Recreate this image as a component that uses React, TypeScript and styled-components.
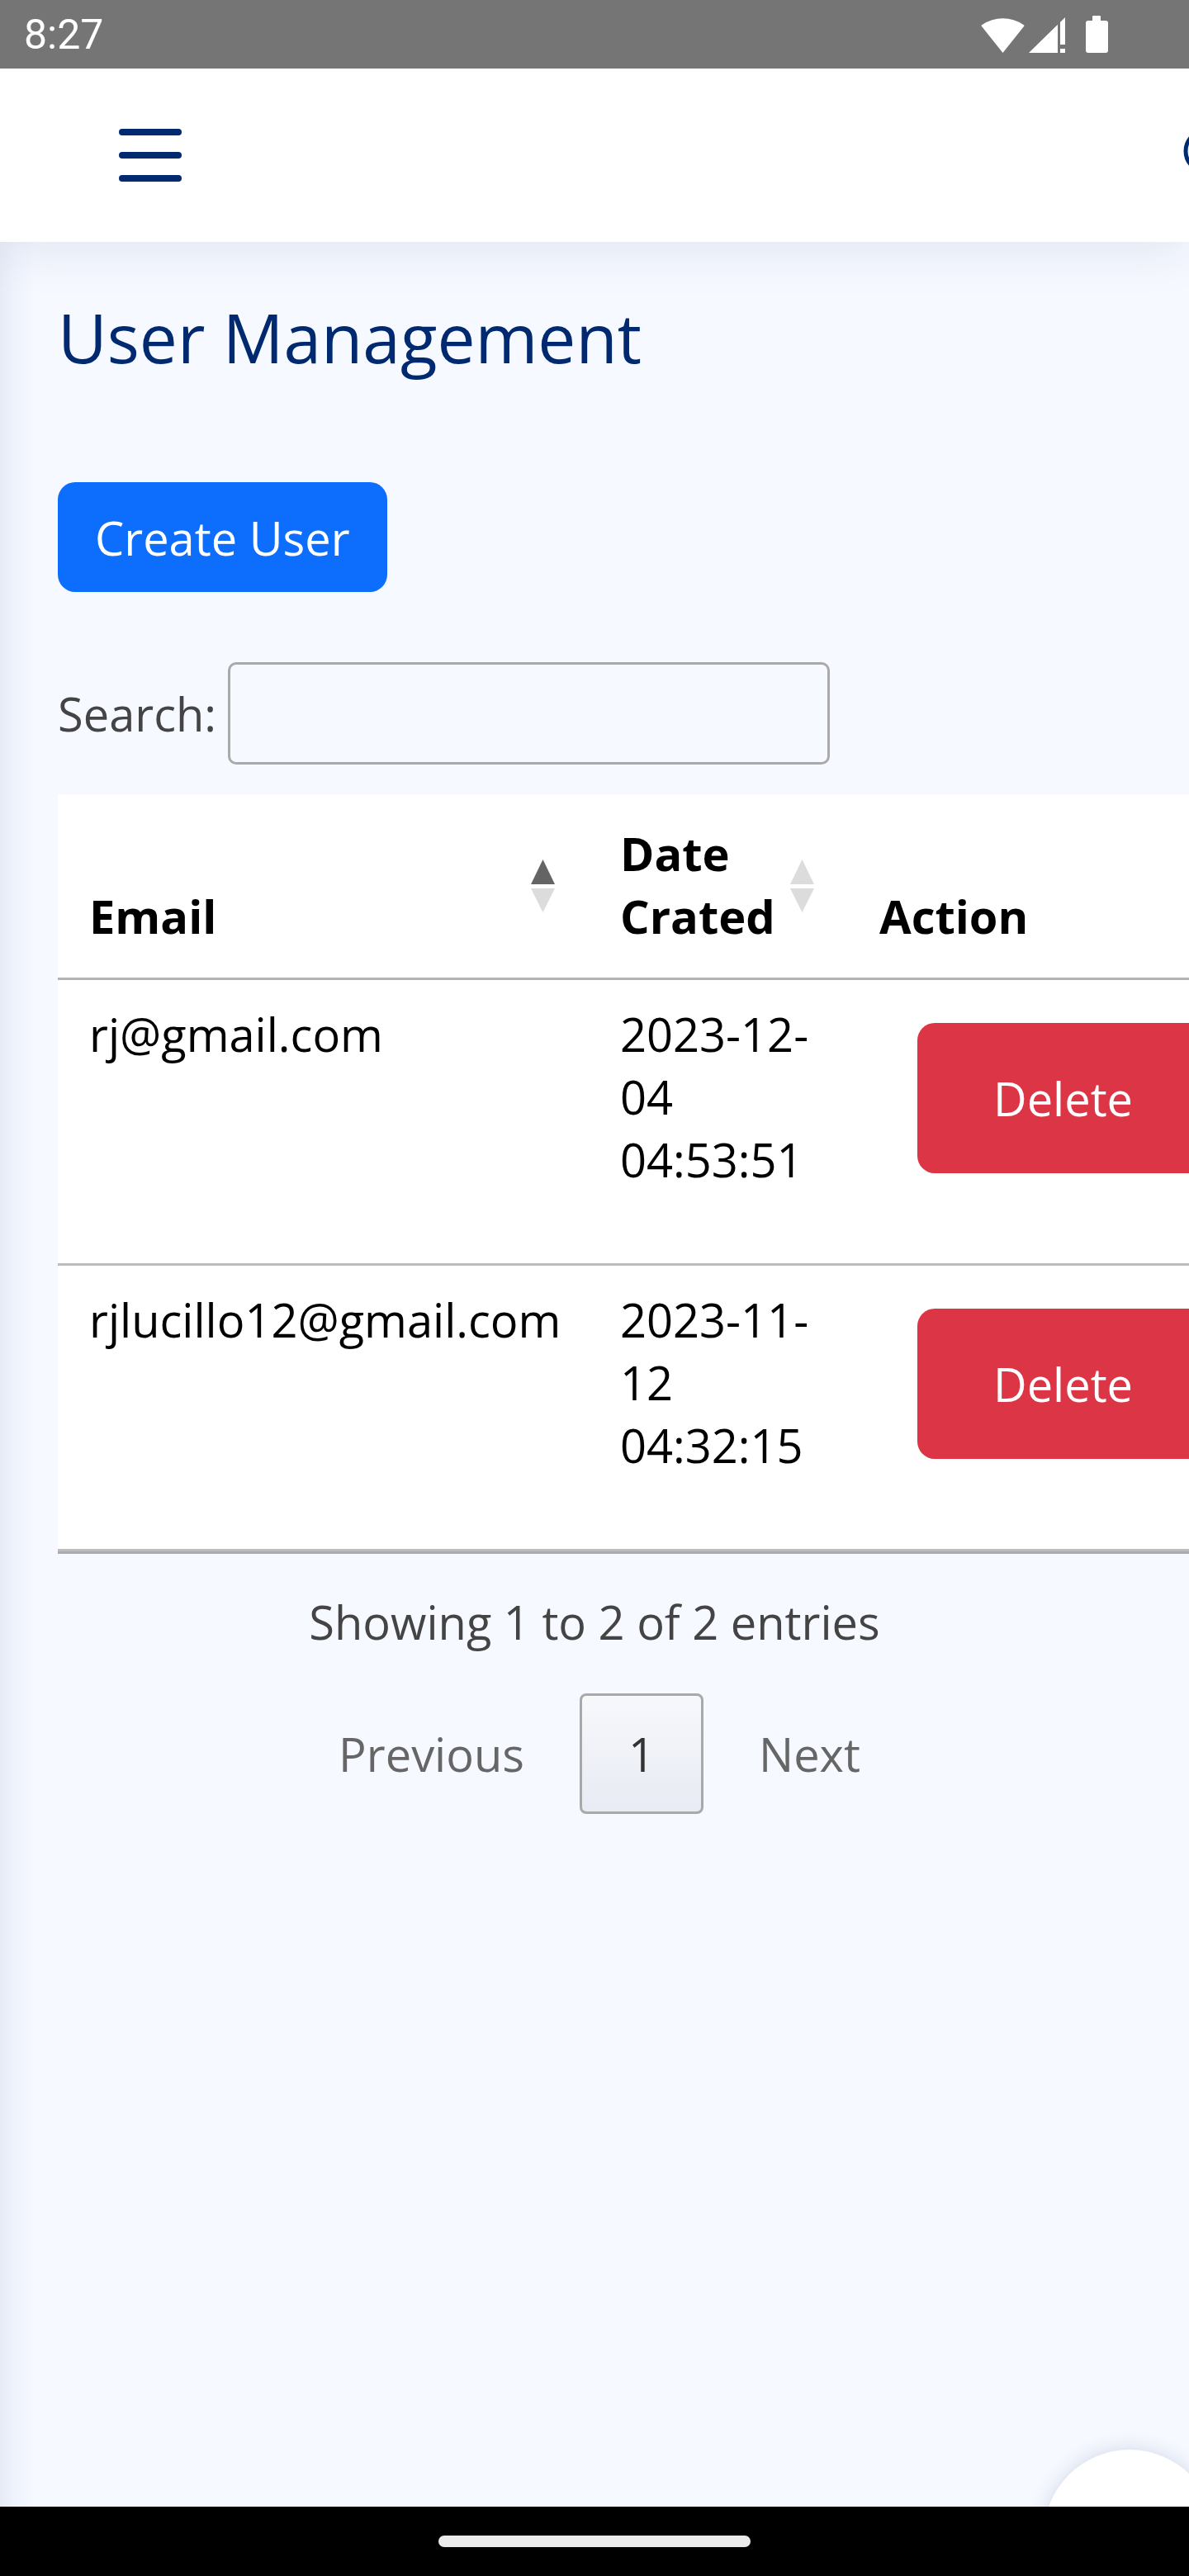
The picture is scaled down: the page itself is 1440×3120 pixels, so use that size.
import React from "react";
import styled, { createGlobalStyle } from "styled-components";

const GlobalStyle = createGlobalStyle`
  html, body { margin: 0; padding: 0; }
  body {
    font-family: "Open Sans", "Noto Sans", sans-serif;
    background: #f6f9ff;
    overflow: hidden;
  }
  * { box-sizing: border-box; }
`;

const Screen = styled.div`
  position: relative;
  width: 1440px;
  height: 3120px;
  display: flex;
  flex-direction: column;
  overflow: hidden;
  background: #f6f9ff;
`;

const StatusBar = styled.div`
  height: 83px;
  flex: none;
  background: #757575;
  display: flex;
  align-items: center;
  justify-content: space-between;
  padding: 0 98px 0 29px;
  color: #fff;
  font-family: Roboto, "Liberation Sans", sans-serif;
  font-size: 50px;
  position: relative;
  z-index: 3;
`;

const StatusIcons = styled.div`
  display: flex;
  align-items: flex-end;
  gap: 5px;
  height: 44px;
`;

const Header = styled.header`
  height: 210px;
  flex: none;
  background: #fff;
  display: flex;
  align-items: center;
  padding-left: 144px;
  position: relative;
  z-index: 2;
  overflow: hidden;
  box-shadow: 0 7px 60px rgba(1, 41, 112, 0.1);
`;

const Spacer = styled.div`
  flex: 1;
`;

const SearchToggle = styled.svg`
  flex: none;
  margin-right: -61px;
`;

const Main = styled.main`
  flex: 1;
  position: relative;
  padding: 65px 70px 0 70px;
  background: linear-gradient(to right, #e6ebf6 0px, #eff3fc 18px, #f6f9ff 44px);
  overflow: hidden;
`;

const Title = styled.h1`
  margin: 0;
  font-size: 82px;
  line-height: 101px;
  font-weight: 500;
  color: #012970;
`;

const CreateButton = styled.button`
  display: block;
  margin-top: 125px;
  height: 133px;
  padding: 0 45px;
  border: none;
  border-radius: 21px;
  background: #0d6efd;
  color: #fff;
  font-family: inherit;
  font-size: 56px;
  line-height: 84px;
`;

const SearchRow = styled.div`
  display: flex;
  align-items: center;
  margin-top: 85px;
  height: 124px;
`;

const SearchLabel = styled.label`
  font-size: 56px;
  line-height: 84px;
  color: #444;
`;

const SearchInput = styled.input`
  margin-left: 14px;
  width: 729px;
  height: 124px;
  border: 3.5px solid #aaa;
  border-radius: 10px;
  background: transparent;
  padding: 17px;
  font-size: 56px;
  font-family: inherit;
`;

const Table = styled.table`
  margin-top: 36px;
  width: 1480px;
  table-layout: fixed;
  border-collapse: separate;
  border-spacing: 0;
  background: #fff;
  border-bottom: 3.5px solid #a9abb0;
  font-size: 56px;
  line-height: 76px;
  color: #000;
`;

const Th = styled.th<{ $pl: number; $pr: number }>`
  position: relative;
  text-align: left;
  vertical-align: bottom;
  font-weight: 700;
  padding: 33px ${(p) => p.$pr}px 37px ${(p) => p.$pl}px;
  border-bottom: 3.5px solid #b3b3b3;
  height: 222px;
`;

const SortIcon = styled.svg`
  position: absolute;
  right: 44px;
  top: 50%;
  transform: translateY(-50%);
`;

const Td = styled.td<{ $pl: number; $pt: number; $pb: number }>`
  vertical-align: top;
  padding: ${(p) => p.$pt}px 20px ${(p) => p.$pb}px ${(p) => p.$pl}px;
  border-bottom: 3.5px solid #bcbcbc;
  word-break: normal;
`;

const DeleteButton = styled.button`
  display: block;
  height: 182px;
  padding: 0 92px;
  border: none;
  border-radius: 21px;
  background: #dc3545;
  color: #fff;
  font-family: inherit;
  font-size: 56px;
  line-height: 84px;
`;

const Info = styled.div`
  margin-top: 40px;
  text-align: center;
  font-size: 56px;
  line-height: 84px;
  color: #444;
`;

const Pagination = styled.div`
  margin-top: 45px;
  padding-left: 12px;
  display: flex;
  justify-content: center;
  align-items: center;
`;

const PageButton = styled.span<{ $current?: boolean }>`
  display: inline-block;
  margin: 0 4px;
  padding: 28px 56px;
  font-size: 56px;
  line-height: 84px;
  border: 3.5px solid ${(p) => (p.$current ? "#a9a9a9" : "transparent")};
  border-radius: 8px;
  color: ${(p) => (p.$current ? "#333" : "#666")};
  background: ${(p) =>
    p.$current ? "linear-gradient(to bottom, #f7f8fc 0%, #e8ebf3 100%)" : "transparent"};
`;

const FloatingCircle = styled.div`
  position: absolute;
  left: 1264px;
  top: 2967px;
  width: 208px;
  height: 208px;
  border-radius: 50%;
  background: #fff;
  box-shadow: 0 0 24px rgba(1, 41, 112, 0.16);
  z-index: 1;
`;

const NavBar = styled.div`
  height: 84px;
  flex: none;
  background: #000;
  display: flex;
  justify-content: center;
  padding-top: 35px;
  position: relative;
  z-index: 3;
`;

const HomePill = styled.div`
  width: 378px;
  height: 14px;
  border-radius: 7px;
  background: #ebebeb;
`;

const rows = [
  { email: "rj@gmail.com", date: "2023-12-04 04:53:51" },
  { email: "rjlucillo12@gmail.com", date: "2023-11-12 04:32:15" },
];

const Sort = ({ active }: { active?: boolean }) => (
  <SortIcon width="29" height="64" viewBox="0 0 29 64">
    <polygon points="14.5,0 29,30 0,30" fill={active ? "#646464" : "#dcdcdc"} />
    <polygon points="0,35 29,35 14.5,64" fill="#dcdcdc" />
  </SortIcon>
);

export default function App() {
  return (
    <>
      <GlobalStyle />
      <Screen>
        <StatusBar>
          <span>8:27</span>
          <StatusIcons>
            <svg width="53" height="43" viewBox="0 0 53 43">
              <path d="M26.5 43 L1 11 Q0 10 1.5 9 A44 44 0 0 1 51.5 9 Q53 10 52 11 Z" fill="#fff" />
            </svg>
            <svg width="44" height="43" viewBox="0 0 44 43">
              <polygon points="0,43 35,43 35,8.8" fill="#fff" />
              <polygon points="38,5.9 44,0 44,33 38,33" fill="#fff" />
              <rect x="38" y="38" width="6" height="5" fill="#fff" />
            </svg>
            <svg width="27" height="45" viewBox="0 0 27 45" style={{ marginLeft: 20 }}>
              <rect x="8" y="0" width="10" height="8" rx="1" fill="#fff" />
              <rect x="0" y="6" width="27" height="39" rx="3" fill="#fff" />
            </svg>
          </StatusIcons>
        </StatusBar>

        <Header>
          <svg width="76" height="64" viewBox="0 0 76 64">
            <g stroke="#012970" strokeWidth="8" strokeLinecap="round">
              <line x1="4" y1="4" x2="72" y2="4" />
              <line x1="4" y1="32" x2="72" y2="32" />
              <line x1="4" y1="60" x2="72" y2="60" />
            </g>
          </svg>
          <Spacer />
          <SearchToggle width="69" height="69" viewBox="0 0 69 69">
            <circle cx="29" cy="29" r="25" fill="none" stroke="#012970" strokeWidth="5" />
            <line x1="47" y1="47" x2="65" y2="65" stroke="#012970" strokeWidth="5" strokeLinecap="round" />
          </SearchToggle>
        </Header>

        <Main>
          <Title>User Management</Title>
          <CreateButton>Create User</CreateButton>
          <SearchRow>
            <SearchLabel htmlFor="search">Search:</SearchLabel>
            <SearchInput id="search" type="search" />
          </SearchRow>

          <Table>
            <colgroup>
              <col style={{ width: 646 }} />
              <col style={{ width: 314 }} />
              <col style={{ width: 520 }} />
            </colgroup>
            <thead>
              <tr>
                <Th $pl={38} $pr={90}>
                  Email
                  <Sort active />
                </Th>
                <Th $pl={35} $pr={90}>
                  Date Crated
                  <Sort />
                </Th>
                <Th $pl={35} $pr={35}>
                  Action
                </Th>
              </tr>
            </thead>
            <tbody>
              {rows.map((r) => (
                <tr key={r.email}>
                  <Td $pl={38} $pt={27} $pb={27}>
                    {r.email}
                  </Td>
                  <Td $pl={35} $pt={27} $pb={27}>
                    {r.date}
                  </Td>
                  <Td $pl={81} $pt={52} $pb={109}>
                    <DeleteButton>Delete</DeleteButton>
                  </Td>
                </tr>
              ))}
            </tbody>
          </Table>

          <Info>Showing 1 to 2 of 2 entries</Info>
          <Pagination>
            <PageButton>Previous</PageButton>
            <PageButton $current>1</PageButton>
            <PageButton>Next</PageButton>
          </Pagination>
        </Main>

        <FloatingCircle />
        <NavBar>
          <HomePill />
        </NavBar>
      </Screen>
    </>
  );
}
